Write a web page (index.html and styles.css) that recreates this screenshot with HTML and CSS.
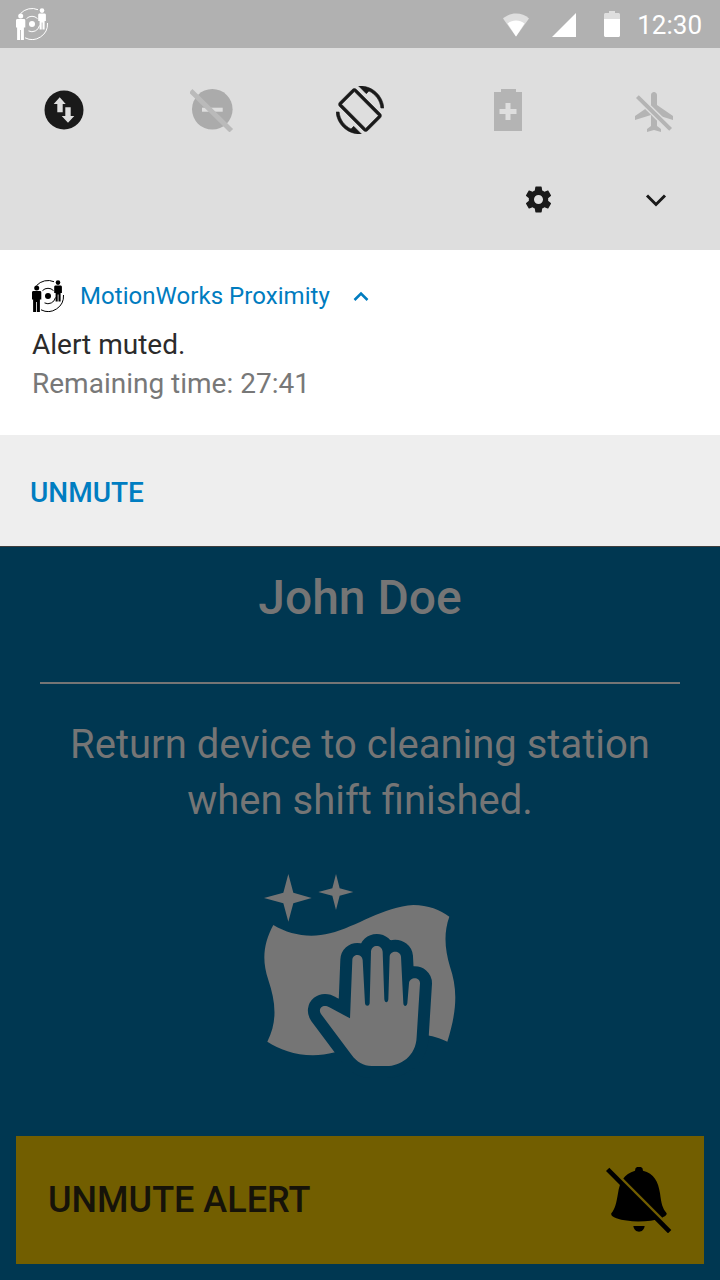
FILE: index.html
```html
<!DOCTYPE html>
<html lang="en">
<head>
    <meta charset="UTF-8">
    <meta name="viewport" content="width=device-width, initial-scale=1.0">
    <title>MotionWorks Proximity</title>
    <link rel="stylesheet" href="styles.css">
</head>
<body>
    <svg class="defs" width="0" height="0">
        <symbol id="logo" viewBox="0 0 32 32">
            <circle cx="16" cy="16" r="3"/>
            <g fill="none" stroke="currentColor" stroke-width="1">
                <path d="M10.500 10.600a7.700 7.700 0 0 1 11 0"/>
                <path d="M23.500 17.500a7.700 7.700 0 0 1-11 5.400"/>
                <path d="M4.500 5.600a15.500 15.500 0 0 1 17.500-3.900"/>
                <path d="M31.500 15a15.500 15.500 0 0 1-22.500 14.800"/>
            </g>
            <circle cx="4.700" cy="8" r="2.500"/>
            <path d="M1.500 11h6.400c.9 0 1.400.6 1.400 1.400v7.100h-1.400v12.500h-3v-10h-.8v10h-3v-12.500h-1.100v-7.100c0-.8.600-1.400 1.500-1.400z"/>
            <circle cx="26" cy="2.600" r="2.300"/>
            <path d="M23.500 5.500h5c.8 0 1.400.6 1.400 1.400v6.100h-1.300v8.500h-2.100v-7h-.8v7h-2.100v-8.500h-1.400v-6.100c0-.8.600-1.400 1.300-1.400z"/>
        </symbol>
    </svg>

    <div class="status-bar">
        <svg class="status-logo"><use href="#logo"/></svg>
        <div class="status-right">
            <svg class="wifi" width="26" height="24" viewBox="0 0 26 24">
                <path class="faded" d="M0 5.500C3.500 2.300 8 .5 13 .5s9.500 1.800 13 5L13 23.500z"/>
                <path class="solid" d="M4.500 10.500C6.800 8.600 9.800 7.500 13 7.500s6.200 1.100 8.500 3L13 23.500z"/>
            </svg>
            <svg class="signal" width="24" height="24" viewBox="0 0 24 24">
                <path class="solid" d="M0 24L24 0v24z"/>
            </svg>
            <svg class="battery" width="16" height="26" viewBox="0 0 16 26">
                <path class="faded" d="M5 0h6v2h3.500c.8 0 1.500.7 1.500 1.500V8H0V3.500C0 2.700.7 2 1.500 2H5z"/>
                <path class="solid" d="M0 8h16v16.500c0 .8-.7 1.500-1.500 1.500h-13C.7 26 0 25.300 0 24.500z"/>
            </svg>
            <span class="clock">12:30</span>
        </div>
    </div>

    <div class="quick-settings">
        <div class="qs-row">
            <div class="qs-cell">
                <svg width="40" height="40" viewBox="0 0 40 40">
                    <circle class="on" cx="20" cy="20" r="19.500"/>
                    <path class="bg" d="M15.700 7.300L21.700 14H18.700v8.300H13.300V14H9.700zM21.300 17.300h5.400V26h3.600L24 32.700 17.700 26h3.600z"/>
                </svg>
            </div>
            <div class="qs-cell">
                <svg width="44" height="44" viewBox="0 0 44 44">
                    <circle class="dnd" cx="22.300" cy="21.300" r="20.300"/>
                    <rect class="bg" x="12" y="19.700" width="20.700" height="4"/>
                    <path class="dnd-slash" d="M.7 2.700l40.600 40"/>
                </svg>
            </div>
            <div class="qs-cell">
                <svg width="48" height="48" viewBox="0 0 24 24">
                    <path class="on rotate" d="M16.480 2.520c3.270 1.550 5.610 4.720 5.970 8.480h1.500C23.440 4.840 18.290 0 12 0l-.66.030 3.810 3.810 1.330-1.320zm-6.250-.77c-.59-.59-1.540-.59-2.120 0L1.750 8.110c-.59.590-.59 1.540 0 2.120l12.020 12.020c.59.590 1.540.590 2.120 0l6.360-6.360c.59-.59.590-1.540 0-2.120L10.230 1.750zm4.600 19.440L2.810 9.170l6.360-6.360 12.020 12.020-6.360 6.360zm-7.310.29C4.250 19.940 1.910 16.760 1.550 13H.05C.56 19.160 5.710 24 12 24l.66-.03-3.810-3.810-1.330 1.320z"/>
                </svg>
            </div>
            <div class="qs-cell">
                <svg width="28" height="42" viewBox="0 0 28 42">
                    <path class="off" d="M7 0h15v3h6v39H0V3h7z"/>
                    <path class="bg" d="M11.500 14h5v6h6v5h-6v6h-5v-6h-6v-5h6z"/>
                </svg>
            </div>
            <div class="qs-cell plane-cell">
                <svg width="48" height="48" viewBox="0 0 24 24">
                    <path class="off" d="M21.500 17v-2l-8-5.500V4.500c0-.83-.67-1.500-1.500-1.500s-1.500.67-1.500 1.500V9.500l-8 5.500v2l8-2.500V20l-2 1.500V23l3.500-1 3.500 1v-1.500l-2-1.500v-5.500z"/>
                    <path class="plane-gap" d="M3.700 5.300L20.300 21.700"/>
                    <path class="plane-slash" d="M3.700 5.300L20.300 21.700"/>
                </svg>
            </div>
        </div>
        <div class="qs-tools">
            <svg class="gear" width="31" height="31" viewBox="0 0 24 24">
                <path class="on" d="M19.430 12.980c.04-.32.070-.64.070-.98s-.03-.66-.07-.98l2.110-1.650c.19-.15.240-.42.120-.64l-2-3.460c-.12-.22-.39-.30-.61-.22l-2.490 1c-.52-.40-1.080-.73-1.690-.98l-.38-2.650C14.460 2.180 14.250 2 14 2h-4c-.25 0-.46.180-.49.420l-.38 2.650c-.61.250-1.170.590-1.690.98l-2.490-1c-.23-.09-.49 0-.61.220l-2 3.460c-.13.220-.07.490.12.640l2.110 1.650c-.04.320-.07.650-.07.980s.03.660.07.980l-2.110 1.650c-.19.150-.24.420-.12.640l2 3.460c.12.220.39.300.61.220l2.490-1c.52.400 1.080.730 1.690.980l.38 2.650c.03.240.24.420.49.420h4c.25 0 .46-.18.49-.42l.38-2.650c.61-.25 1.170-.59 1.690-.98l2.490 1c.23.090.49 0 .61-.22l2-3.460c.12-.22.070-.49-.12-.64l-2.110-1.650zM12 15.500c-1.930 0-3.500-1.570-3.500-3.500s1.570-3.500 3.500-3.500 3.500 1.570 3.500 3.500-1.570 3.500-3.500 3.500z"/>
            </svg>
            <svg class="chevron-down" width="22" height="14" viewBox="0 0 22 14">
                <path d="M2 2.500l9 9 9-9"/>
            </svg>
        </div>
    </div>

    <div class="notification">
        <div class="notif-head">
            <svg class="notif-logo"><use href="#logo"/></svg>
            <span class="app-name">MotionWorks Proximity</span>
            <svg class="chevron-up" width="16" height="11" viewBox="0 0 16 11">
                <path d="M1.500 9L8 2.500 14.500 9"/>
            </svg>
        </div>
        <div class="notif-title">Alert muted.</div>
        <div class="notif-text">Remaining time: 27:41</div>
    </div>
    <div class="notif-action">UNMUTE</div>

    <div class="main">
        <h1 class="name">John Doe</h1>
        <div class="rule"></div>
        <p class="message">Return device to cleaning station<br>when shift finished.</p>
        <svg class="clean-icon" width="240" height="220" viewBox="0 0 720 660">
            <path class="shape" d="M145 42L160 98L215 114L160 130L145 185L130 130L72 114L130 98z"/>
            <path class="shape" d="M288 42L299 85L340 96L299 107L288 150L277 107L235 96L277 85z"/>
            <path class="shape" d="M100 195C150 225 210 235 270 220C350 200 430 140 520 135C565 135 600 150 628 170C610 220 615 270 630 320C650 380 655 440 622 545C600 535 585 530 560 525L285 577C200 600 130 575 82 545C115 480 105 420 85 360C65 300 70 250 100 195z"/>
            <path class="hand" d="M243 462C232 445 250 430 268 442L330 475L337 300C338 280 366 280 368 300L375 430C376 440 388 440 389 430L393 275C394 252 426 252 428 275L433 418C434 430 444 430 445 418L449 290C450 270 481 270 483 290L490 430C491 441 500 441 502 430L507 370C509 350 540 350 540 370L530 530C528 590 480 618 440 618L395 618C370 618 350 605 335 585z"/>
        </svg>
        <div class="alert-button">
            <span>UNMUTE ALERT</span>
            <svg width="66" height="66" viewBox="81 51 198 198">
                <path d="M168 62a12 12 0 0 1 24 0C225 70 238 95 243 130C247 160 250 175 263 190C263 198 255 200 250 203C210 218 150 218 112 205C100 201 95 195 97 190C108 178 112 160 117 130C122 95 135 72 168 62z"/>
                <path d="M163 228h34C195 240 188 245 180 245C172 245 165 240 163 228z"/>
                <path class="bell-gap" d="M100 60L272 232"/>
                <path class="bell-slash" d="M86 58L272 245"/>
            </svg>
        </div>
    </div>
</body>
</html>
```

FILE: styles.css
```css
* {
    box-sizing: border-box;
}
body {
    margin: 0;
    width: 720px;
    height: 1280px;
    overflow: hidden;
    font-family: Roboto, sans-serif;
    background-color: #003751;
}
.defs {
    display: block;
    height: 0;
}
svg {
    display: block;
    fill: currentColor;
}

.status-bar {
    height: 48px;
    padding: 8px 18px 0 16px;
    display: flex;
    justify-content: space-between;
    background-color: #b1b1b1;
    color: #fff;
}
.status-logo {
    width: 32px;
    height: 32px;
}
.status-right {
    display: flex;
    align-items: flex-start;
}
.status-right .wifi {
    margin: 5px 23px 0 0;
}
.status-right .signal {
    margin: 5px 28px 0 0;
}
.status-right .battery {
    margin: 3px 17px 0 0;
}
.solid {
    fill: #fff;
}
.faded {
    fill: #dedede;
}
.clock {
    font-size: 26px;
    line-height: 32px;
    margin-top: 1px;
}

.quick-settings {
    height: 202px;
    background-color: #dedede;
}
.qs-row {
    height: 124px;
    display: grid;
    grid-template-columns: repeat(5, 148px);
    margin-left: -10px;
}
.qs-cell {
    display: flex;
    align-items: center;
    justify-content: center;
}
.plane-cell {
    padding-right: 4px;
}
.on {
    fill: #1a1a1a;
}
.rotate {
    stroke: #1a1a1a;
    stroke-width: 0.3;
}
.off {
    fill: #b4b4b4;
}
.bg {
    fill: #dedede;
}
.dnd {
    fill: #ababab;
}
.dnd-slash {
    stroke: #bababa;
    stroke-width: 5;
    fill: none;
}
.plane-gap {
    stroke: #dedede;
    stroke-width: 3.400;
    fill: none;
}
.plane-slash {
    stroke: #b4b4b4;
    stroke-width: 2;
    fill: none;
}
.qs-tools {
    display: flex;
    align-items: center;
    padding-top: 12px;
}
.gear {
    margin-left: 523px;
}
.chevron-down {
    margin-left: 91px;
    fill: none;
    stroke: #1a1a1a;
    stroke-width: 3;
}

.notification {
    height: 185px;
    padding: 30px 32px 0;
    background-color: #fff;
}
.notif-head {
    display: flex;
    align-items: center;
    height: 32px;
}
.notif-logo {
    width: 32px;
    height: 32px;
    color: #000;
}
.app-name {
    margin-left: 16px;
    font-size: 24px;
    letter-spacing: 0.05px;
    color: #007cbf;
}
.chevron-up {
    margin-left: 23px;
    fill: none;
    stroke: #007cbf;
    stroke-width: 2.500;
}
.notif-title {
    margin-top: 13px;
    font-size: 28px;
    line-height: 39px;
    color: #2b2b2b;
}
.notif-text {
    font-size: 28px;
    line-height: 40px;
    color: #787878;
}
.notif-action {
    height: 112px;
    padding: 4px 30px 0;
    display: flex;
    align-items: center;
    font-size: 28px;
    font-weight: 500;
    color: #007dc1;
    background-color: #eeeeee;
    border-bottom: 1px solid #3d3d3d;
}

.main {
    height: 733px;
    padding: 0 16px;
    display: flex;
    flex-direction: column;
    align-items: center;
    color: #757575;
}
.name {
    margin: 23px 0 0;
    font-size: 48px;
    line-height: 56px;
    font-weight: 500;
}
.rule {
    margin-top: 56px;
    width: 640px;
    height: 2px;
    background-color: #757575;
}
.message {
    margin: 33px 0 0;
    font-size: 40px;
    line-height: 56px;
    text-align: center;
}
.clean-icon {
    margin-top: 31px;
}
.shape {
    fill: #757575;
}
.hand {
    fill: #757575;
    stroke: #003751;
    stroke-width: 72;
    stroke-linejoin: round;
    paint-order: stroke;
}
.alert-button {
    margin-top: 56px;
    width: 688px;
    height: 128px;
    padding: 0 32px;
    display: flex;
    align-items: center;
    justify-content: space-between;
    background-color: #725e00;
    color: #161309;
    font-size: 36px;
    font-weight: 500;
}
.alert-button svg {
    color: #000;
}
.bell-gap {
    stroke: #725e00;
    stroke-width: 10;
    fill: none;
}
.bell-slash {
    stroke: #000;
    stroke-width: 14;
    fill: none;
}
```
